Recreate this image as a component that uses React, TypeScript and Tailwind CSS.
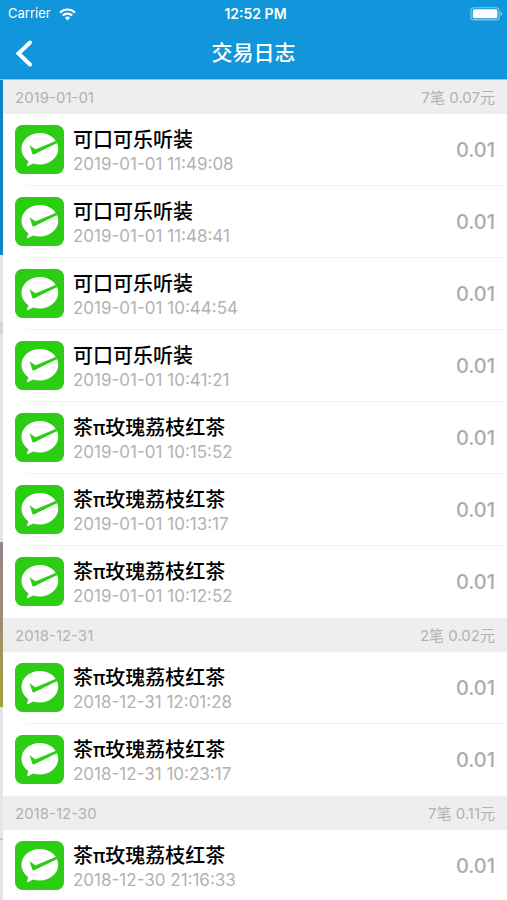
import { clsx } from 'clsx'

interface Transaction {
  name: string
  time: string
  amount: string
}

interface DayGroup {
  date: string
  count: number
  total: string
  items: Transaction[]
}

const COLA = '可口可乐听装'
const TEA = '茶π玫瑰荔枝红茶'

const groups: DayGroup[] = [
  {
    date: '2019-01-01',
    count: 7,
    total: '0.07',
    items: [
      { name: COLA, time: '11:49:08', amount: '0.01' },
      { name: COLA, time: '11:48:41', amount: '0.01' },
      { name: COLA, time: '10:44:54', amount: '0.01' },
      { name: COLA, time: '10:41:21', amount: '0.01' },
      { name: TEA, time: '10:15:52', amount: '0.01' },
      { name: TEA, time: '10:13:17', amount: '0.01' },
      { name: TEA, time: '10:12:52', amount: '0.01' },
    ],
  },
  {
    date: '2018-12-31',
    count: 2,
    total: '0.02',
    items: [
      { name: TEA, time: '12:01:28', amount: '0.01' },
      { name: TEA, time: '10:23:17', amount: '0.01' },
    ],
  },
  {
    date: '2018-12-30',
    count: 7,
    total: '0.11',
    items: [{ name: TEA, time: '21:16:33', amount: '0.01' }],
  },
]

function WifiIcon() {
  return (
    <svg viewBox="0 0 17 13" className="h-[13px] w-[17px]" fill="none" stroke="currentColor" strokeWidth="2.2" aria-hidden="true">
      <path d="M1 4.6a10.6 10.6 0 0 1 15 0" />
      <path d="M3.8 7.5a6.6 6.6 0 0 1 9.4 0" />
      <path d="M8.5 12.4l-2.6-2.6a3.7 3.7 0 0 1 5.2 0z" fill="currentColor" stroke="none" />
    </svg>
  )
}

function BatteryIcon() {
  return (
    <svg viewBox="0 0 33 14" className="h-[14px] w-[33px]" aria-hidden="true">
      <rect x="0.9" y="0.7" width="28.2" height="12.2" rx="3.4" fill="none" stroke="#fff" strokeOpacity="0.5" strokeWidth="1.1" />
      <rect x="2.8" y="2.3" width="24.6" height="9" rx="1.6" fill="#fff" />
      <path d="M30.6 4.8c1 .4 1.6 1.1 1.6 2s-.6 1.6-1.6 2z" fill="#fff" fillOpacity="0.6" />
    </svg>
  )
}

function BackIcon() {
  return (
    <svg viewBox="0 0 32 32" className="size-8" fill="none" stroke="currentColor" strokeWidth="4" strokeLinecap="round" aria-hidden="true">
      <path d="M22 5.5L10.5 16.5L22 27.5" />
    </svg>
  )
}

function StatusBar() {
  return (
    <div className="grid h-7 grid-cols-3 items-center pl-2 pr-1">
      <div className="flex items-center gap-2 text-[13px]">
        <span>Carrier</span>
        <WifiIcon />
      </div>
      <span className="text-center text-sm font-semibold">12:52 PM</span>
      <div className="flex justify-end">
        <BatteryIcon />
      </div>
    </div>
  )
}

// Green WeChat Pay badge
function PayIcon() {
  return (
    <svg viewBox="0 0 49 49" className="size-[49px] shrink-0" aria-hidden="true">
      <rect width="49" height="49" rx="7.5" fill="#2dcd16" />
      <path
        d="M24.8 8C14.6 8 6.5 15 6.5 23.800c0 5 2.600 9.400 6.800 12.300l-1.200 4.200c-.2.800.5 1.200 1.200.800l5-2.700c2 .7 4.200 1.100 6.500 1.100 10.200 0 18.400-7 18.400-15.700 0-8.800-8.200-15.800-18.400-15.800z"
        fill="#fff"
      />
      <path d="M14.600 20.200l5.300 3.800c.5.300 1 .3 1.500.1L41 15.800l1.200 2.300L19.300 29.300c-.9.400-1.500.2-1.900-.6z" fill="#2dcd16" />
    </svg>
  )
}

// Sliver of the previous screen that shows while this one slides in
function PreviousScreen() {
  return (
    <div className="flex w-[3px] shrink-0 flex-col bg-[#e3e5e8]" aria-hidden="true">
      <div className="h-[175px] bg-[#0f86c6]" />
      <div className="h-[67px]" />
      <div className="h-3 bg-[#d2d4d6]" />
      <div className="h-[208px]" />
      <div className="h-[165px] bg-linear-to-b from-[#94868a] via-[#a08c70] to-[#a8a032]" />
      <div className="h-[131px]" />
      <div className="h-0.5 bg-[#c4c6c8]" />
    </div>
  )
}

function TransactionRow({ date, item, last }: { date: string; item: Transaction; last: boolean }) {
  return (
    <li>
      <div className="flex h-[71px] items-center gap-[9px] px-3">
        <PayIcon />
        <div className="flex-1 pt-1">
          <h3 className="text-xl/6 font-medium text-black">{item.name}</h3>
          <p className="text-[17px]/6 text-[#b2b2b2]">
            {date} {item.time}
          </p>
        </div>
        <span className="text-xl font-medium text-[#acacac]">{item.amount}</span>
      </div>
      <div className={clsx('ml-6 h-px', !last && 'bg-[#f1f1f1]')} />
    </li>
  )
}

function DaySection({ group }: { group: DayGroup }) {
  return (
    <section>
      <div className="flex h-[34px] items-center justify-between bg-[#eeeeee] px-3 pt-0.5 text-[#b2b2b2]">
        <h2 className="text-[15px]">{group.date}</h2>
        <span className="text-[15px]">
          {group.count}笔 {group.total}元
        </span>
      </div>
      <ul>
        {group.items.map((item, i) => (
          <TransactionRow key={item.time} date={group.date} item={item} last={i === group.items.length - 1} />
        ))}
      </ul>
    </section>
  )
}

export default function App() {
  return (
    <div className="flex h-screen flex-col overflow-hidden bg-white font-[Inter,'Noto_Sans_CJK_SC',sans-serif]">
      <header className="h-20 shrink-0 border-b border-[#8ccbef] bg-[#1296db] text-white">
        <StatusBar />
        <div className="grid h-12 grid-cols-[1fr_auto_1fr] items-center px-2 pt-0.5">
          <button type="button" aria-label="返回" className="justify-self-start">
            <BackIcon />
          </button>
          <h1 className="text-[21px] font-medium">交易日志</h1>
        </div>
      </header>
      <div className="flex min-h-0 flex-1">
        <PreviousScreen />
        <main className="min-w-0 flex-1 overflow-hidden">
          {groups.map(group => (
            <DaySection key={group.date} group={group} />
          ))}
        </main>
      </div>
    </div>
  )
}
